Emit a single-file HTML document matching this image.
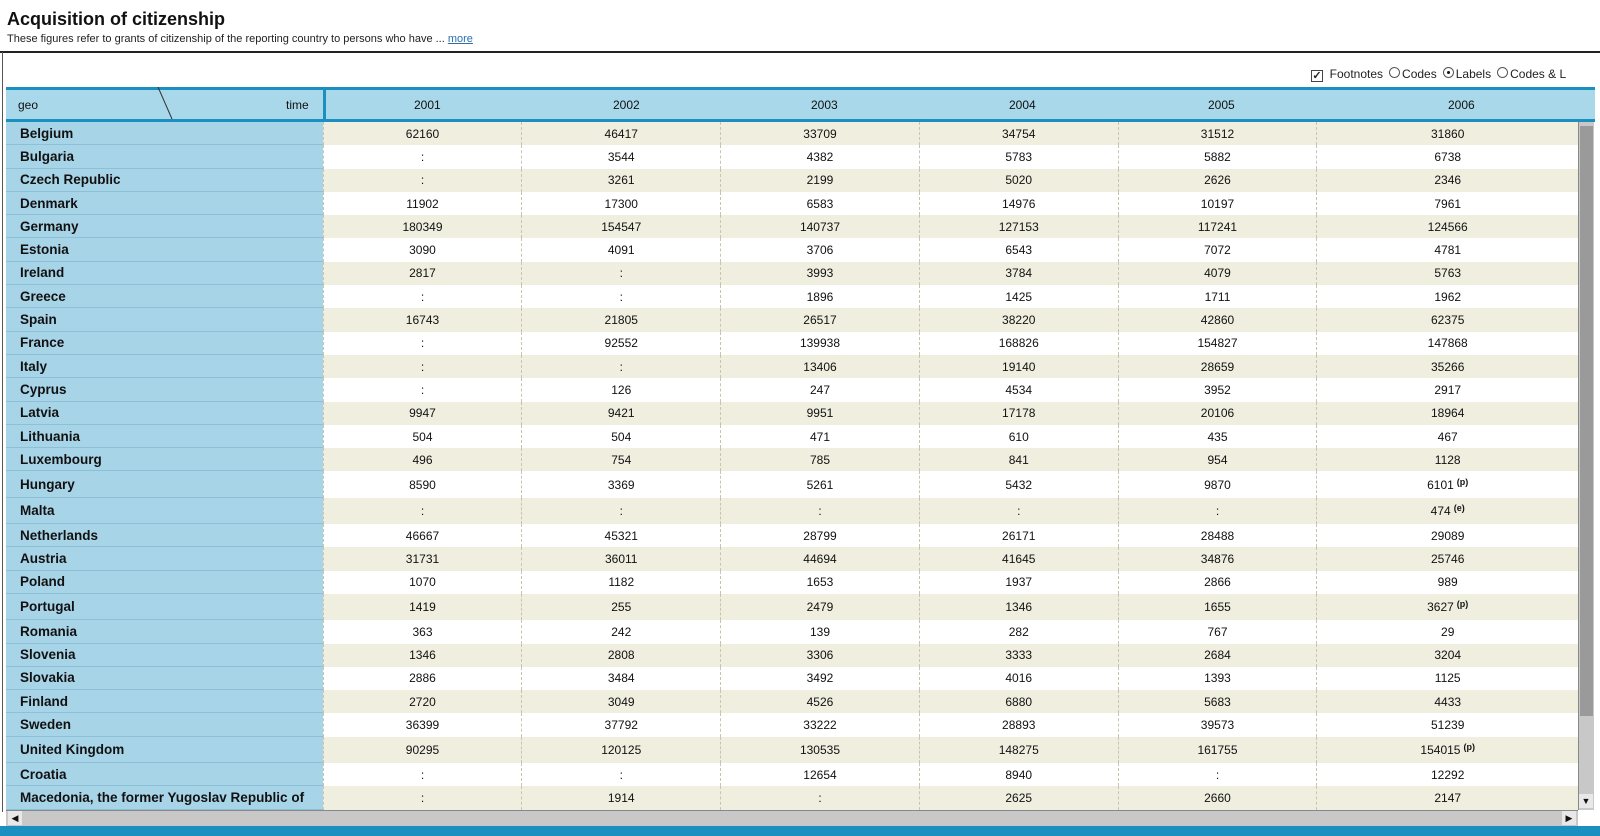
<!DOCTYPE html>
<html><head><meta charset="utf-8"><style>
*{margin:0;padding:0;box-sizing:border-box}
body{width:1600px;height:836px;background:#fff;font-family:"Liberation Sans",sans-serif;position:relative;overflow:hidden;color:#111}
h1{position:absolute;left:7px;top:9px;font-size:18px;font-weight:bold}
.sub{position:absolute;left:7px;top:33px;font-size:11px;color:#222}
.sub a{color:#2a6fb0;text-decoration:underline}
.hr{position:absolute;left:0;top:51px;width:1600px;height:2px;background:#222}
.vl{position:absolute;left:2px;top:52px;width:1px;height:760px;background:#555}
.opts{position:absolute;left:1311px;top:67px;font-size:12px;color:#222;white-space:nowrap}
.cb{display:inline-block;width:12px;height:12px;border:1px solid #444;vertical-align:-1px;font-size:11px;line-height:10px;text-align:center;font-weight:bold}
.rd{display:inline-block;width:11px;height:11px;border:1px solid #555;border-radius:50%;vertical-align:0;margin:0 2px 0 6px;position:relative}
.rd.on:after{content:"";position:absolute;left:3px;top:3px;width:3px;height:3px;border-radius:50%;background:#111}
.head{position:absolute;left:6px;top:87px;width:1589px;height:35px;background:#a8d8ea;border-top:3px solid #1a8fc0;border-bottom:3px solid #1a8fc0}
.head .gsep{position:absolute;left:317px;top:-3px;width:3px;height:35px;background:#1a8fc0}
.head span{position:absolute;top:8px;font-size:12px}
#t{position:absolute;left:6px;top:122px;width:1572px;height:688px;overflow:hidden}
.r{display:flex;height:23.3px}
.r.s{height:26.3px}
.r>div{width:199px;font-size:12px;text-align:center;border-left:1px dashed #c8c4b0;display:flex;align-items:center;justify-content:center}
.r>div.g{width:317px;background:#a8d4e8;justify-content:flex-start;padding-left:14px;font-weight:bold;font-size:13.5px;border-left:none;border-bottom:1px solid #8cc0d8}
.r>div:last-child{width:262px}
.r:nth-child(odd)>div{background:#f0eedf}
.r>div.g{background:#a8d4e8!important}
sup{font-size:9px;font-weight:bold;margin-left:3px;position:relative;top:-3px}
.vs{position:absolute;left:1578px;top:122px;width:16px;height:688px;background:#c8c8c8;border-left:1px solid #888}
.vs .th{position:absolute;left:1px;top:4px;width:13px;height:590px;background:#9a9a9a}
.hs{position:absolute;left:6px;top:810px;width:1572px;height:16px;background:#c8c8c8;border-top:1px solid #888}
.foot{position:absolute;left:0;top:826px;width:1600px;height:10px;background:#1a8fc0}
.ar{position:absolute;font-size:9px;color:#111;background:#e8e8e8;width:14px;height:14px;text-align:center;line-height:14px}
</style></head><body>
<h1>Acquisition of citizenship</h1>
<div class="sub">These figures refer to grants of citizenship of the reporting country to persons who have ... <a>more</a></div>
<div class="hr"></div><div class="vl"></div>
<div class="opts"><span class="cb">✓</span>&nbsp; Footnotes<span class="rd"></span>Codes<span class="rd on"></span>Labels<span class="rd"></span>Codes &amp; L</div>
<div class="head"><span style="left:12px">geo</span>
<svg style="position:absolute;left:150px;top:-3px" width="20" height="35"><line x1="2" y1="0" x2="16" y2="32" stroke="#333" stroke-width="1"/></svg>
<span style="left:280px">time</span><div class="gsep"></div>
<span style="left:408px">2001</span><span style="left:607px">2002</span><span style="left:805px">2003</span><span style="left:1003px">2004</span><span style="left:1202px">2005</span><span style="left:1442px">2006</span></div>
<div id="t">
<div class="r"><div class="g">Belgium</div><div>62160</div><div>46417</div><div>33709</div><div>34754</div><div>31512</div><div>31860</div></div>
<div class="r"><div class="g">Bulgaria</div><div>:</div><div>3544</div><div>4382</div><div>5783</div><div>5882</div><div>6738</div></div>
<div class="r"><div class="g">Czech Republic</div><div>:</div><div>3261</div><div>2199</div><div>5020</div><div>2626</div><div>2346</div></div>
<div class="r"><div class="g">Denmark</div><div>11902</div><div>17300</div><div>6583</div><div>14976</div><div>10197</div><div>7961</div></div>
<div class="r"><div class="g">Germany</div><div>180349</div><div>154547</div><div>140737</div><div>127153</div><div>117241</div><div>124566</div></div>
<div class="r"><div class="g">Estonia</div><div>3090</div><div>4091</div><div>3706</div><div>6543</div><div>7072</div><div>4781</div></div>
<div class="r"><div class="g">Ireland</div><div>2817</div><div>:</div><div>3993</div><div>3784</div><div>4079</div><div>5763</div></div>
<div class="r"><div class="g">Greece</div><div>:</div><div>:</div><div>1896</div><div>1425</div><div>1711</div><div>1962</div></div>
<div class="r"><div class="g">Spain</div><div>16743</div><div>21805</div><div>26517</div><div>38220</div><div>42860</div><div>62375</div></div>
<div class="r"><div class="g">France</div><div>:</div><div>92552</div><div>139938</div><div>168826</div><div>154827</div><div>147868</div></div>
<div class="r"><div class="g">Italy</div><div>:</div><div>:</div><div>13406</div><div>19140</div><div>28659</div><div>35266</div></div>
<div class="r"><div class="g">Cyprus</div><div>:</div><div>126</div><div>247</div><div>4534</div><div>3952</div><div>2917</div></div>
<div class="r"><div class="g">Latvia</div><div>9947</div><div>9421</div><div>9951</div><div>17178</div><div>20106</div><div>18964</div></div>
<div class="r"><div class="g">Lithuania</div><div>504</div><div>504</div><div>471</div><div>610</div><div>435</div><div>467</div></div>
<div class="r"><div class="g">Luxembourg</div><div>496</div><div>754</div><div>785</div><div>841</div><div>954</div><div>1128</div></div>
<div class="r s"><div class="g">Hungary</div><div>8590</div><div>3369</div><div>5261</div><div>5432</div><div>9870</div><div>6101<sup>(p)</sup></div></div>
<div class="r s"><div class="g">Malta</div><div>:</div><div>:</div><div>:</div><div>:</div><div>:</div><div>474<sup>(e)</sup></div></div>
<div class="r"><div class="g">Netherlands</div><div>46667</div><div>45321</div><div>28799</div><div>26171</div><div>28488</div><div>29089</div></div>
<div class="r"><div class="g">Austria</div><div>31731</div><div>36011</div><div>44694</div><div>41645</div><div>34876</div><div>25746</div></div>
<div class="r"><div class="g">Poland</div><div>1070</div><div>1182</div><div>1653</div><div>1937</div><div>2866</div><div>989</div></div>
<div class="r s"><div class="g">Portugal</div><div>1419</div><div>255</div><div>2479</div><div>1346</div><div>1655</div><div>3627<sup>(p)</sup></div></div>
<div class="r"><div class="g">Romania</div><div>363</div><div>242</div><div>139</div><div>282</div><div>767</div><div>29</div></div>
<div class="r"><div class="g">Slovenia</div><div>1346</div><div>2808</div><div>3306</div><div>3333</div><div>2684</div><div>3204</div></div>
<div class="r"><div class="g">Slovakia</div><div>2886</div><div>3484</div><div>3492</div><div>4016</div><div>1393</div><div>1125</div></div>
<div class="r"><div class="g">Finland</div><div>2720</div><div>3049</div><div>4526</div><div>6880</div><div>5683</div><div>4433</div></div>
<div class="r"><div class="g">Sweden</div><div>36399</div><div>37792</div><div>33222</div><div>28893</div><div>39573</div><div>51239</div></div>
<div class="r s"><div class="g">United Kingdom</div><div>90295</div><div>120125</div><div>130535</div><div>148275</div><div>161755</div><div>154015<sup>(p)</sup></div></div>
<div class="r"><div class="g">Croatia</div><div>:</div><div>:</div><div>12654</div><div>8940</div><div>:</div><div>12292</div></div>
<div class="r"><div class="g">Macedonia, the former Yugoslav Republic of</div><div>:</div><div>1914</div><div>:</div><div>2625</div><div>2660</div><div>2147</div></div>
</div>
<div class="vs"><div class="th"></div><div class="ar" style="left:0;top:672px">▼</div></div>
<div class="hs"><div class="ar" style="left:2px;top:0">◀</div><div class="ar" style="left:1556px;top:0">▶</div></div>
<div class="foot"></div>
</body></html>
